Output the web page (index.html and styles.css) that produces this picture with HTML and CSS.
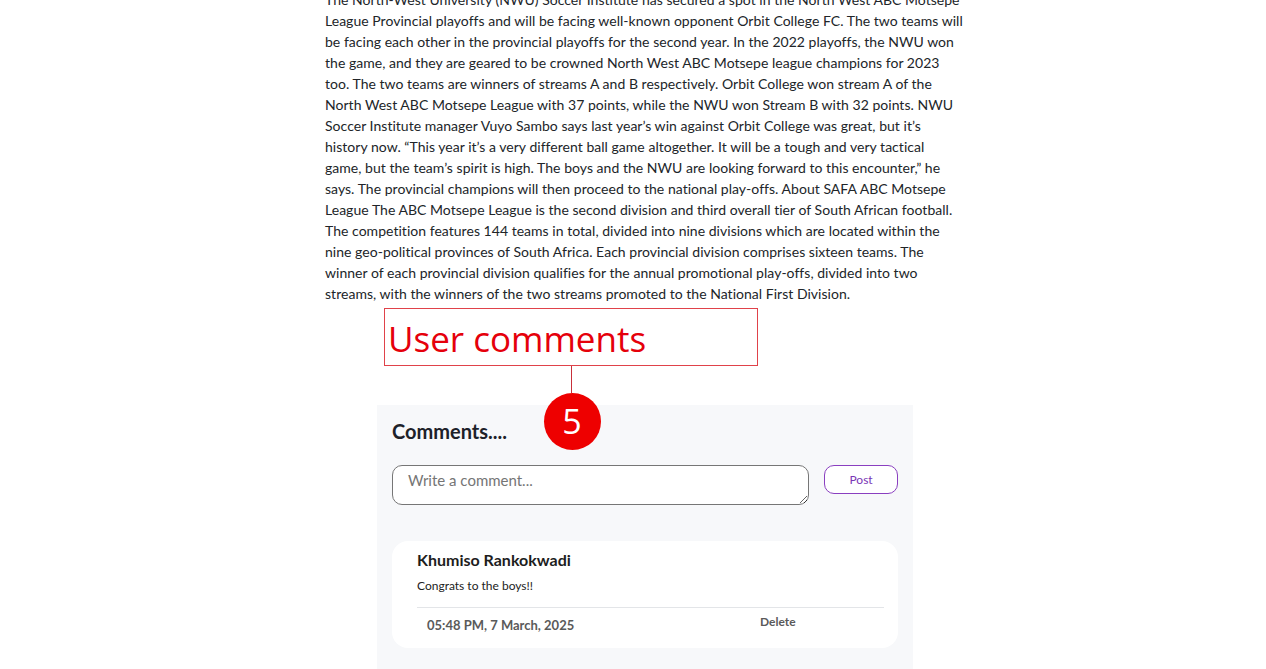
FILE: index.html
```html
<!DOCTYPE html>
<html lang="en">
<head>
<meta charset="utf-8">
<title>Article</title>
<link rel="stylesheet" href="styles.css">
</head>
<body>
<main class="page">
  <article class="article">
    <p>The North-West University (NWU) Soccer Institute has secured a spot in the North West ABC Motsepe<br>
League Provincial playoffs and will be facing well-known opponent Orbit College FC. The two teams will<br>
be facing each other in the provincial playoffs for the second year. In the 2022 playoffs, the NWU won<br>
the game, and they are geared to be crowned North West ABC Motsepe league champions for 2023<br>
too. The two teams are winners of streams A and B respectively. Orbit College won stream A of the<br>
North West ABC Motsepe League with 37 points, while the NWU won Stream B with 32 points. NWU<br>
Soccer Institute manager Vuyo Sambo says last year’s win against Orbit College was great, but it’s<br>
history now. “This year it’s a very different ball game altogether. It will be a tough and very tactical<br>
game, but the team’s spirit is high. The boys and the NWU are looking forward to this encounter,” he<br>
says. The provincial champions will then proceed to the national play-offs. About SAFA ABC Motsepe<br>
League The ABC Motsepe League is the second division and third overall tier of South African football.<br>
The competition features 144 teams in total, divided into nine divisions which are located within the<br>
nine geo-political provinces of South Africa. Each provincial division comprises sixteen teams. The<br>
winner of each provincial division qualifies for the annual promotional play-offs, divided into two<br>
streams, with the winners of the two streams promoted to the National First Division.</p>
  </article>

  <section class="comments">
    <div class="annotation">
      <div class="annotation-label">User comments</div>
      <div class="annotation-line"></div>
      <div class="annotation-badge">5</div>
    </div>
    <h2 class="comments-title">Comments....</h2>
    <form class="comment-form">
      <textarea class="comment-input" placeholder="Write a comment..."></textarea>
      <button type="button" class="post-btn">Post</button>
    </form>
    <div class="comment-card">
      <div class="comment-author">Khumiso Rankokwadi</div>
      <div class="comment-text">Congrats to the boys!!</div>
      <div class="comment-footer">
        <span class="comment-date">05:48 PM, 7 March, 2025</span>
        <span class="comment-delete">Delete</span>
      </div>
    </div>
  </section>
</main>
</body>
</html>
```

FILE: styles.css
```css
html, body {
  margin: 0;
  padding: 0;
  background: #fff;
}
body {
  font-family: Lato, "Open Sans", sans-serif;
  color: #212529;
  overflow: hidden;
}
.page {
  display: flex;
  flex-direction: column;
  align-items: flex-start;
}
.article {
  margin: -11px 0 0 325px;
  width: 660px;
}
.article p {
  margin: 0;
  font-size: 14px;
  line-height: 21px;
  letter-spacing: 0.03px;
}
.comments {
  position: relative;
  margin: 101px 0 0 377px;
  width: 536px;
  background: #f7f8fa;
  padding: 14px 15px 22px;
  box-sizing: border-box;
}
.annotation {
  position: absolute;
  left: 7px;
  top: -97px;
  width: 374px;
  display: flex;
  flex-direction: column;
  align-items: center;
}
.annotation-label {
  align-self: stretch;
  height: 58px;
  border: 1px solid #e0424a;
  box-sizing: border-box;
  color: #e5000b;
  font-family: "Open Sans", sans-serif;
  font-size: 35px;
  line-height: 60px;
  padding-left: 3px;
  margin: 0;
}
.annotation-line {
  width: 1px;
  height: 27px;
  background: #c8303a;
  margin-left: 1px;
}
.annotation-badge {
  width: 57px;
  height: 57px;
  border-radius: 50%;
  background: #ee0000;
  color: #fff;
  font-family: "Open Sans", sans-serif;
  font-size: 34px;
  line-height: 57px;
  text-align: center;
  margin-left: 2px;
}
.comments-title {
  margin: 0;
  font-size: 20px;
  font-weight: 700;
  line-height: 24px;
  color: #1d2129;
}
.comment-form {
  display: flex;
  align-items: flex-start;
  gap: 15px;
  margin-top: 22px;
}
.comment-input {
  width: 418px;
  height: 40px;
  box-sizing: border-box;
  border: 1px solid #767676;
  border-radius: 10px;
  padding: 5px 15px;
  font-family: inherit;
  font-size: 15px;
  resize: vertical;
  background: #fff;
}
.comment-input::placeholder {
  color: #757575;
}
.post-btn {
  width: 74px;
  height: 29px;
  border: 1px solid #8a3fc0;
  border-radius: 10px;
  background: #fff;
  color: #7a35b5;
  font-family: inherit;
  font-size: 12px;
  padding: 0;
}
.comment-card {
  margin-top: 36px;
  background: #fff;
  border-radius: 16px;
  padding: 9px 14px 14px 25px;
}
.comment-author {
  font-size: 16px;
  font-weight: 700;
  line-height: 20px;
  color: #1d1d1d;
}
.comment-text {
  margin-top: 8px;
  font-size: 12px;
  line-height: 16px;
  color: #222;
  padding-bottom: 13px;
  border-bottom: 1px solid #e3e5e8;
}
.comment-footer {
  display: flex;
  align-items: flex-start;
  padding: 6px 0 0 10px;
  color: #5a5a5a;
  font-weight: 700;
}
.comment-date {
  font-size: 13px;
  line-height: 18px;
  width: 333px;
  padding-top: 2px;
}
.comment-delete {
  font-size: 12px;
  line-height: 16px;
}
```
